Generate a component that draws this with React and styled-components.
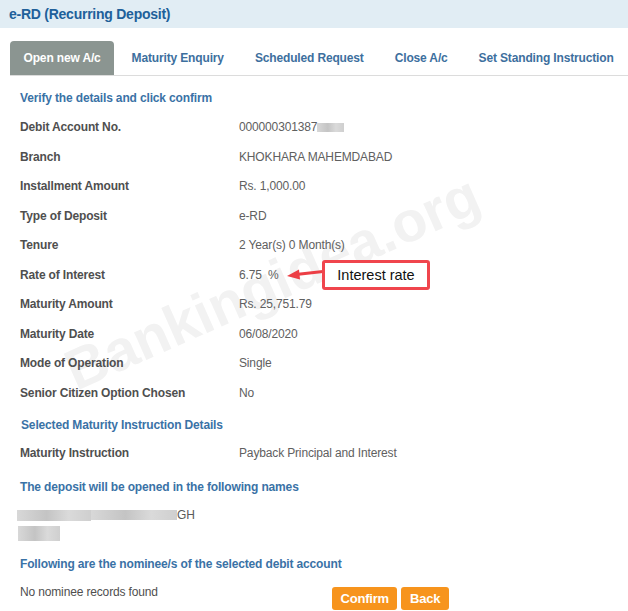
import React from "react";
import styled, { createGlobalStyle } from "styled-components";

const GlobalStyle = createGlobalStyle`
  html, body { margin: 0; padding: 0; background: #fff; }
  body { font-family: "Liberation Sans", Arial, sans-serif; letter-spacing: -0.15px; }
`;

const Page = styled.div`
  position: relative;
  width: 628px;
  min-height: 611px;
  overflow: hidden;
  background: #fff;
`;

const TitleBar = styled.div`
  height: 28px;
  background: #e1edf4;
  display: flex;
  align-items: center;
  padding-left: 9px;
  font-size: 14px;
  letter-spacing: -0.25px;
  font-weight: bold;
  color: #20609a;
`;

const TabBar = styled.div`
  display: flex;
  gap: 4px;
  margin: 13px 0 0 10px;
  border-bottom: 1px solid #dcdcdc;
`;

const Tab = styled.div`
  flex-shrink: 0;
  white-space: nowrap;
  height: 34px;
  display: flex;
  align-items: center;
  padding: 0 13.5px;
  font-size: 12px;
  font-weight: bold;
  border-radius: 4px 4px 0 0;
  color: ${(p) => (p.$active ? "#fff" : "#3d6f9e")};
  background: ${(p) => (p.$active ? "#8b9591" : "transparent")};
`;

const Content = styled.div`
  position: relative;
  padding-left: 20px;
  z-index: 1;
`;

const Heading = styled.div`
  font-size: 12px;
  font-weight: bold;
  line-height: 14px;
  color: #3a72a6;
  margin-top: ${(p) => p.$mt}px;
  margin-bottom: ${(p) => p.$mb || 0}px;
  margin-left: ${(p) => p.$ml || 0}px;
`;

const Grid = styled.div`
  display: grid;
  grid-template-columns: 219px 1fr;
  grid-auto-rows: 29.5px;
  align-items: center;
`;

const Label = styled.div`
  font-size: 12px;
  font-weight: bold;
  color: #4f4f4f;
`;

const Value = styled.div`
  font-size: 12px;
  color: #606060;
  display: flex;
  align-items: center;
  white-space: pre;
`;

const Blur = styled.span`
  display: inline-block;
  width: ${(p) => p.$w}px;
  height: ${(p) => p.$h}px;
  background: linear-gradient(90deg, #d8d8d8, #c4c4c4 40%, #dadada 70%, #cfcfcf);
  filter: blur(0.6px);
`;

const NameLine = styled.div`
  margin-top: 14px;
  margin-left: -3px;
  height: 14px;
  display: flex;
  align-items: center;
  font-size: 12px;
  color: #5a5a5a;
`;

const NameBlurRow = styled.div`
  margin-top: 4px;
  margin-left: -2px;
  display: flex;
`;

const Footer = styled.div`
  display: grid;
  grid-template-columns: 312px auto;
  align-items: start;
  margin-top: 6px;
`;

const NoRecords = styled.div`
  font-size: 12px;
  color: #4f4f4f;
  margin-top: 8px;
  line-height: 14px;
`;

const Buttons = styled.div`
  display: flex;
  gap: 4px;
  margin-top: 10px;
`;

const Button = styled.button`
  height: 23px;
  padding: 0 8.5px;
  border: none;
  border-radius: 3px;
  background: #f7941d;
  color: #fff;
  font-family: "Liberation Sans", Arial, sans-serif;
  font-size: 13px;
  letter-spacing: -0.2px;
  font-weight: bold;
`;

const Watermark = styled.div`
  position: absolute;
  left: 272px;
  top: 282px;
  transform: translate(-50%, -50%) rotate(-24deg);
  font-size: 57px;
  font-weight: bold;
  letter-spacing: 0;
  color: #f2f2f2;
  white-space: nowrap;
  pointer-events: none;
  z-index: 0;
`;

const Callout = styled.div`
  position: absolute;
  left: 322px;
  top: 260px;
  width: 108px;
  height: 30px;
  box-sizing: border-box;
  border: 3px solid #f0454d;
  border-radius: 3px;
  background: #fff;
  display: flex;
  align-items: center;
  justify-content: center;
  font-size: 14.5px;
  letter-spacing: 0;
  color: #111;
  z-index: 2;
`;

const Arrow = styled.svg`
  position: absolute;
  left: 284px;
  top: 264px;
  z-index: 2;
`;

const rows = [
  ["Debit Account No.", "account"],
  ["Branch", "KHOKHARA MAHEMDABAD"],
  ["Installment Amount", "Rs. 1,000.00"],
  ["Type of Deposit", "e-RD"],
  ["Tenure", "2 Year(s) 0 Month(s)"],
  ["Rate of Interest", "6.75  %"],
  ["Maturity Amount", "Rs. 25,751.79"],
  ["Maturity Date", "06/08/2020"],
  ["Mode of Operation", "Single"],
  ["Senior Citizen Option Chosen", "No"],
];

const tabs = [
  "Open new A/c",
  "Maturity Enquiry",
  "Scheduled Request",
  "Close A/c",
  "Set Standing Instruction",
];

export default function App() {
  return (
    <Page>
      <GlobalStyle />
      <TitleBar>e-RD (Recurring Deposit)</TitleBar>
      <TabBar>
        {tabs.map((t, i) => (
          <Tab key={t} $active={i === 0}>
            {t}
          </Tab>
        ))}
      </TabBar>
      <Watermark>Bankingidea.org</Watermark>
      <Content>
        <Heading $mt={15} $mb={7.25}>Verify the details and click confirm</Heading>
        <Grid>
          {rows.map(([l, v]) => (
            <React.Fragment key={l}>
              <Label>{l}</Label>
              <Value>
                {v === "account" ? (
                  <>
                    000000301387
                    <Blur $w={27} $h={9} />
                  </>
                ) : (
                  v
                )}
              </Value>
            </React.Fragment>
          ))}
        </Grid>
        <Heading $mt={10.75} $mb={6.25} $ml={1}>Selected Maturity Instruction Details</Heading>
        <Grid>
          <Label>Maturity Instruction</Label>
          <Value>Payback Principal and Interest</Value>
        </Grid>
        <Heading $mt={12.25}>The deposit will be opened in the following names</Heading>
        <NameLine>
          <Blur $w={74} $h={11} />
          <Blur $w={86} $h={10} />
          GH
        </NameLine>
        <NameBlurRow>
          <Blur $w={42} $h={15} />
        </NameBlurRow>
        <Heading $mt={16}>Following are the nominee/s of the selected debit account</Heading>
        <Footer>
          <NoRecords>No nominee records found</NoRecords>
          <Buttons>
            <Button>Confirm</Button>
            <Button>Back</Button>
          </Buttons>
        </Footer>
      </Content>
      <Arrow width="40" height="18" viewBox="0 0 40 18">
        <line x1="12" y1="10.5" x2="39" y2="7.5" stroke="#ec3e45" strokeWidth="3" />
        <polygon points="3,12 15,5.5 16,15.5" fill="#ec3e45" />
      </Arrow>
      <Callout>Interest rate</Callout>
    </Page>
  );
}
